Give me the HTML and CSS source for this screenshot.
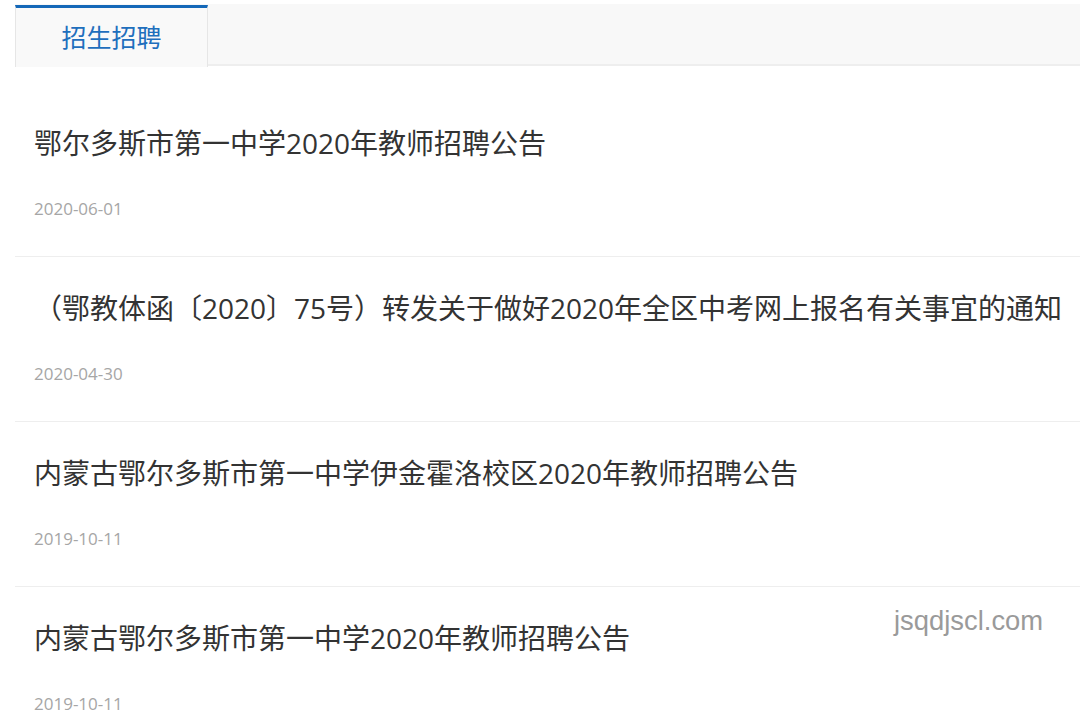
FILE: index.html
```html
<!DOCTYPE html>
<html lang="zh-CN">
<head>
<meta charset="utf-8">
<link rel="stylesheet" href="styles.css">
</head>
<body>
<div class="page">
  <div class="tabs">
    <div class="tab active">招生招聘</div>
  </div>
  <ul class="list">
    <li class="item">
      <div class="title">鄂尔多斯市第一中学2020年教师招聘公告</div>
      <div class="date">2020-06-01</div>
    </li>
    <li class="item">
      <div class="title">（鄂教体函〔2020〕75号）转发关于做好2020年全区中考网上报名有关事宜的通知</div>
      <div class="date">2020-04-30</div>
    </li>
    <li class="item">
      <div class="title">内蒙古鄂尔多斯市第一中学伊金霍洛校区2020年教师招聘公告</div>
      <div class="date">2019-10-11</div>
    </li>
    <li class="item">
      <div class="title">内蒙古鄂尔多斯市第一中学2020年教师招聘公告</div>
      <div class="date">2019-10-11</div>
    </li>
  </ul>
  <div class="watermark">jsqdjscl.com</div>
</div>
</body>
</html>
```

FILE: styles.css
```css
html, body {
  margin: 0;
  padding: 0;
  background: #fff;
}
body {
  width: 1080px;
  height: 716px;
  overflow: hidden;
  font-family: "Open Sans", "Noto Sans CJK SC", sans-serif;
}
.page {
  position: relative;
  padding: 4px 0 0 15px;
}
.tabs {
  display: flex;
  height: 60px;
  background: #f8f8f8;
  border-bottom: 2px solid #eeeeee;
  width: 1080px;
}
.tab {
  width: 193px;
  box-sizing: border-box;
  margin-top: 1px;
  height: 62px;
  border-top: 3px solid #1468b8;
  border-left: 1px solid #e6e6e6;
  border-right: 1px solid #e6e6e6;
  background: #f9f9f9;
  color: #1f6fbd;
  font-family: "Noto Sans CJK SC", sans-serif;
  font-size: 25px;
  line-height: 56px;
  text-align: center;
}
.list {
  list-style: none;
  margin: 26px 0 0 0;
  padding: 0;
  width: 1080px;
}
.item {
  padding: 31px 0 37px 19px;
  border-bottom: 1px solid #eeeeee;
}
.title {
  font-family: "Open Sans", "Noto Sans CJK SC", sans-serif;
  font-size: 28px;
  line-height: 40px;
  color: #333333;
  white-space: nowrap;
}
.date {
  margin-top: 36px;
  font-family: "Open Sans", sans-serif;
  font-size: 17px;
  line-height: 20px;
  color: #a6a6a6;
}
.watermark {
  position: absolute;
  left: 894px;
  top: 603px;
  font-family: "Liberation Sans", Arial, sans-serif;
  font-size: 27.4px;
  line-height: 36px;
  color: #9a9a9a;
}
```
